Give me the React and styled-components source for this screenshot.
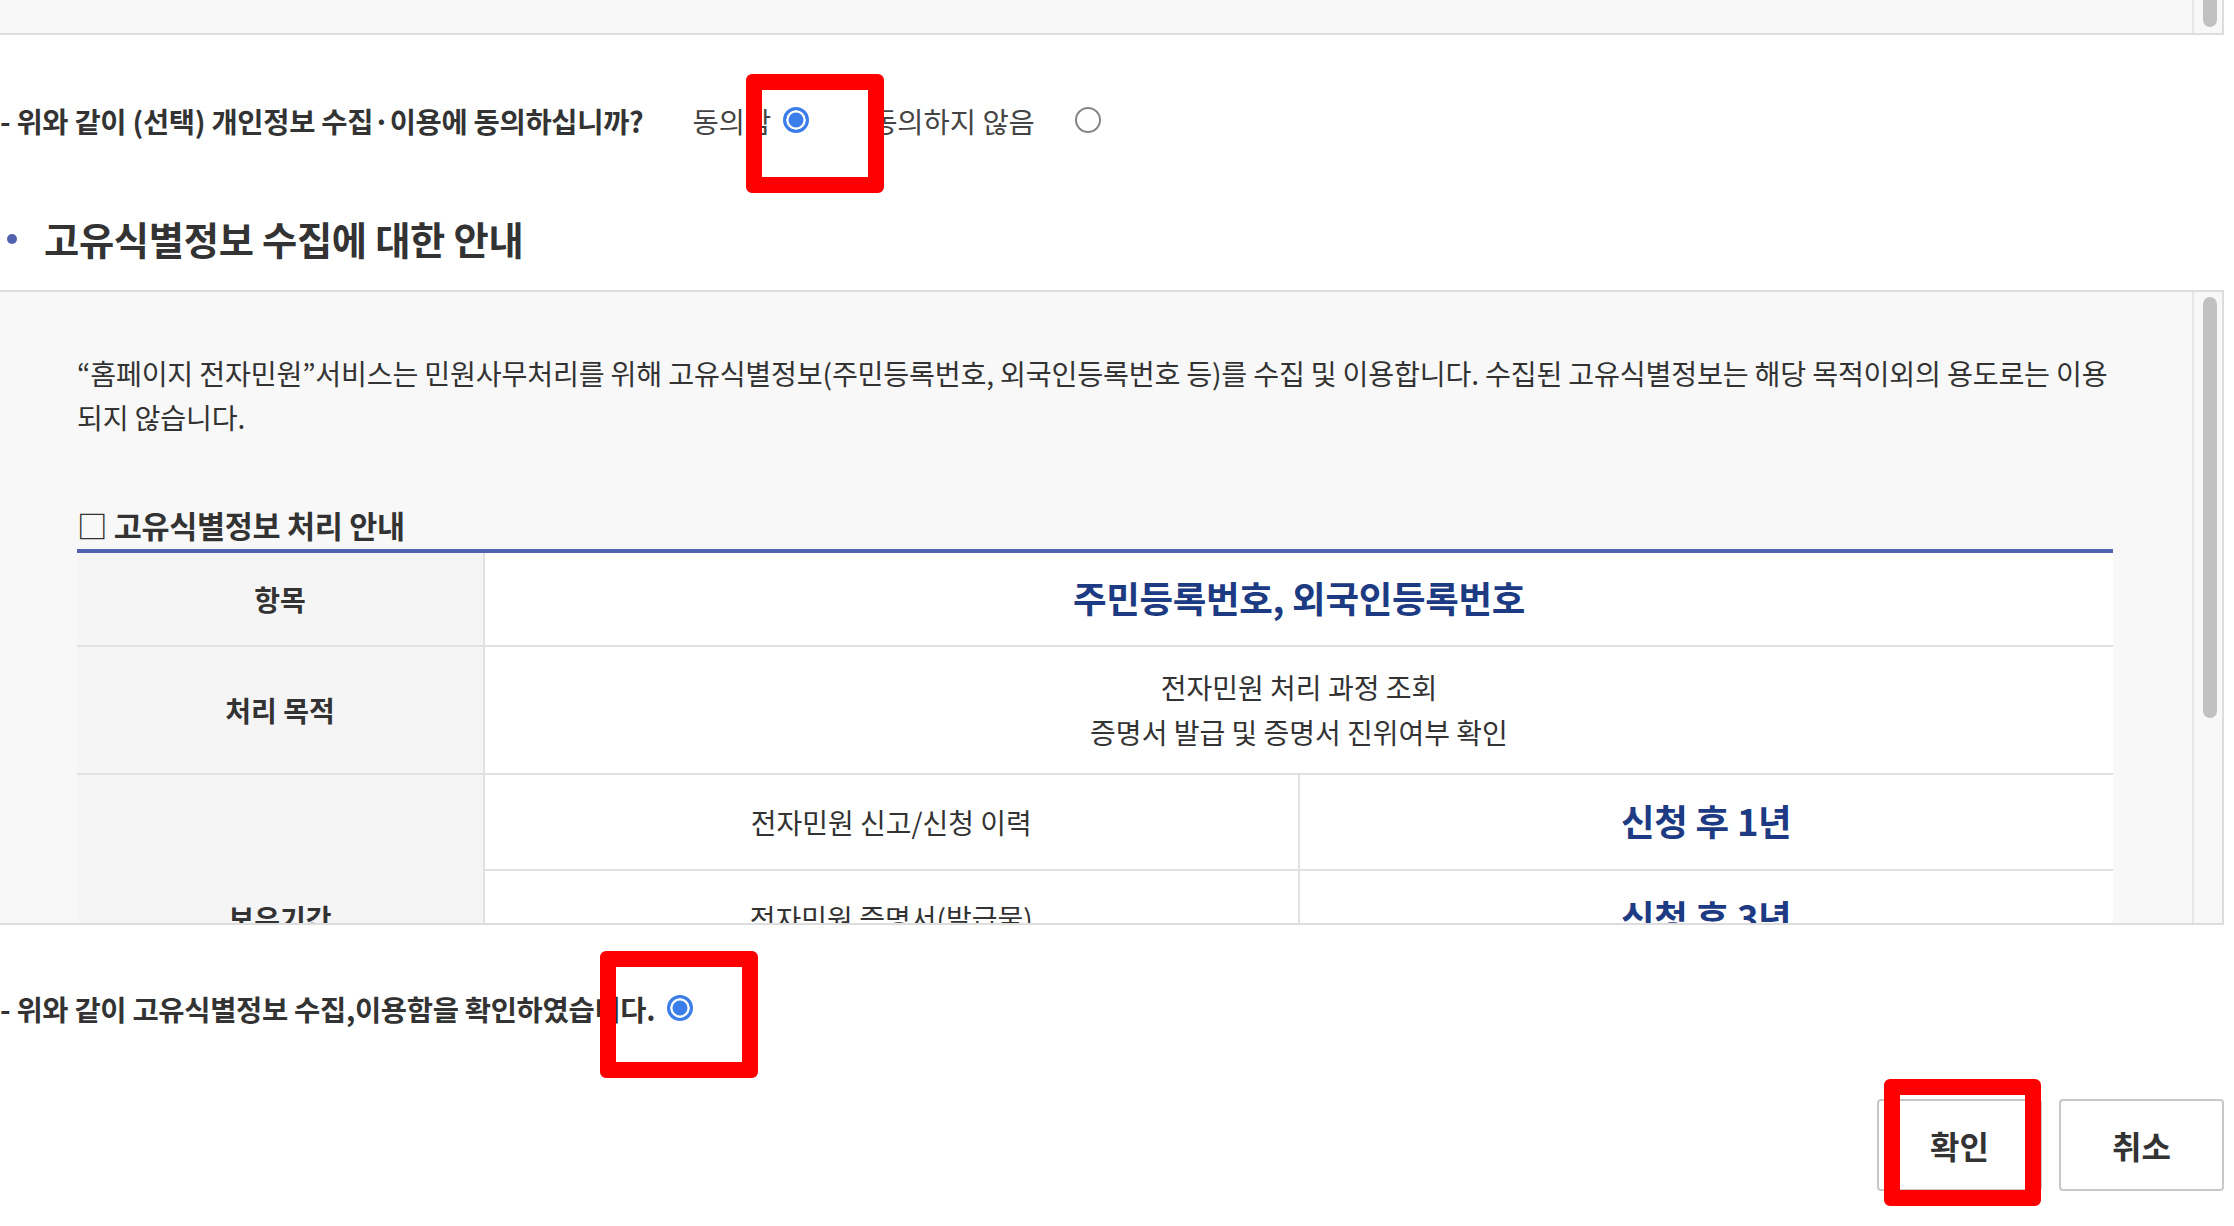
import React from "react"
import styled, { createGlobalStyle } from "styled-components"

const GlobalStyle = createGlobalStyle`
  html, body {
    margin: 0;
    padding: 0;
    background: #fff;
    overflow: hidden;
  }
  body {
    font-family: "Noto Sans CJK KR", "Noto Sans", sans-serif;
    color: #333;
  }
`

const Page = styled.div`
  position: relative;
  width: 2234px;
  height: 1226px;
  overflow: hidden;
`

/* a box with its own (drawn) scrollbar on the right */
const ScrollBox = styled.div`
  display: flex;
  width: 2224px;
  height: ${(p) => p.$h}px;
  box-sizing: border-box;
  margin-top: ${(p) => p.$mt || 0}px;
  background: #f8f8f8;
  border-top: ${(p) => (p.$top ? "2px solid #ddd" : "none")};
  border-bottom: 2px solid #ddd;
  border-right: 2px solid #ddd;
`

const ScrollArea = styled.div`
  flex: 1;
  min-width: 0;
  overflow: hidden;
`

const Track = styled.div`
  flex: 0 0 30px;
  box-sizing: border-box;
  display: flex;
  flex-direction: column;
  justify-content: ${(p) => (p.$end ? "flex-end" : "flex-start")};
  padding: ${(p) => (p.$end ? "0 5px 6px 9px" : "5px 5px 0 9px")};
  border-left: 2px solid #e6e6e6;
  overflow: hidden;
`

const Thumb = styled.div`
  height: ${(p) => p.$h}px;
  background: #c1c1c1;
  border-radius: ${(p) => (p.$end ? "0 0 8px 8px" : "8px")};
`

const QuestionRow = styled.div`
  display: flex;
  align-items: center;
  height: ${(p) => p.$h || 60}px;
  margin-top: ${(p) => p.$mt}px;
`

const Question = styled.span`
  font-size: 28.5px;
  font-weight: 700;
  color: #333;
  letter-spacing: -0.3px;
  white-space: nowrap;
`

const Option = styled.label`
  display: flex;
  align-items: center;
  margin-left: ${(p) => p.$ml}px;
  font-size: 28.5px;
  color: #444;
  white-space: nowrap;
`

const Radio = styled.input.attrs({ type: "radio" })`
  appearance: none;
  -webkit-appearance: none;
  flex: 0 0 auto;
  width: 26px;
  height: 26px;
  margin: 0 0 0 ${(p) => p.$ml}px;
  border-radius: 50%;
  box-sizing: border-box;
  border: 2px solid #858585;
  background: #fff;

  &:checked {
    border: 3px solid #3b7de9;
    background: #3b7de9;
    box-shadow: inset 0 0 0 2.5px #fff;
  }
`

const Title = styled.h2`
  display: flex;
  align-items: center;
  margin: 63px 0 0;
  height: 50px;
  font-size: 38.3px;
  font-weight: 700;
  color: #333;
  letter-spacing: -0.3px;

  &::before {
    content: "";
    width: 10px;
    height: 10px;
    border-radius: 50%;
    background: #5163b0;
    margin: 2px 27px 0 7px;
  }
`

const InfoInner = styled.div`
  padding: 59px 79px 150px 77px;
`

const Paragraph = styled.p`
  margin: 0 -16px 0 0;
  font-size: 28.2px;
  line-height: 44px;
  color: #333;
  letter-spacing: -0.2px;
`

const SubTitle = styled.h3`
  margin: 66px 0 4px;
  font-size: 30.5px;
  line-height: 40px;
  font-weight: 700;
  color: #333;
  letter-spacing: -0.3px;
`

const Table = styled.table`
  width: 100%;
  table-layout: fixed;
  border-collapse: collapse;
  border-top: 4px solid #5163b0;
  background: #fff;
`

const Th = styled.th`
  background: #f5f5f5;
  font-size: 28px;
  font-weight: 700;
  color: #333;
  text-align: center;
  border-bottom: 2px solid #e1e1e1;
  border-right: 2px solid #e1e1e1;
  padding: 0;
`

const Td = styled.td`
  height: ${(p) => p.$h}px;
  padding: 0;
  text-align: center;
  font-size: 28px;
  line-height: 45px;
  color: #333;
  border-bottom: 2px solid #e1e1e1;
  border-left: ${(p) => (p.$split ? "2px solid #e1e1e1" : "none")};
`

const Strong = styled.strong`
  font-size: 36.5px;
  font-weight: 700;
  color: #1d3b82;
  letter-spacing: -0.3px;
`

const ButtonRow = styled.div`
  display: flex;
  justify-content: flex-end;
  gap: 17px;
  margin-top: 71px;
  padding-right: 10px;
`

const Button = styled.button`
  width: 165px;
  height: 92px;
  box-sizing: border-box;
  background: #fff;
  border: 2px solid #c8c8c8;
  border-radius: 4px;
  font-family: inherit;
  font-size: 32px;
  font-weight: 700;
  color: #333;
`

const Marker = styled.div`
  position: absolute;
  left: ${(p) => p.$x}px;
  top: ${(p) => p.$y}px;
  width: ${(p) => p.$w}px;
  height: ${(p) => p.$h}px;
  box-sizing: border-box;
  border: 16px solid #ff0000;
  border-radius: 6px;
  pointer-events: none;
`

const retention = [
  ["전자민원 신고/신청 이력", "신청 후 1년"],
  ["전자민원 증명서(발급물)", "신청 후 3년"],
  ["전자민원 처리 결과", "신청 후 5년"],
]

export default function App() {
  return (
    <Page>
      <GlobalStyle />
      <ScrollBox $h={35}>
        <ScrollArea />
        <Track $end>
          <Thumb $end $h={40} />
        </Track>
      </ScrollBox>

      <QuestionRow $mt={55}>
        <Question>- 위와 같이 (선택) 개인정보 수집·이용에 동의하십니까?</Question>
        <Option $ml={49}>
          동의함
          <Radio name="optional" $ml={12} defaultChecked />
        </Option>
        <Option $ml={62}>
          동의하지 않음
          <Radio name="optional" $ml={40} />
        </Option>
      </QuestionRow>

      <Title>고유식별정보 수집에 대한 안내</Title>

      <ScrollBox $h={635} $mt={27} $top>
        <ScrollArea>
          <InfoInner>
            <Paragraph>
              “홈페이지 전자민원”서비스는 민원사무처리를 위해 고유식별정보(주민등록번호, 외국인등록번호 등)를 수집 및
              이용합니다. 수집된 고유식별정보는 해당 목적이외의 용도로는 이용되지 않습니다.
            </Paragraph>
            <SubTitle>□ 고유식별정보 처리 안내</SubTitle>
            <Table>
              <colgroup>
                <col style={{ width: 407 }} />
                <col />
                <col />
              </colgroup>
              <tbody>
                <tr>
                  <Th>항목</Th>
                  <Td $h={92} colSpan={2}>
                    <Strong>주민등록번호, 외국인등록번호</Strong>
                  </Td>
                </tr>
                <tr>
                  <Th>처리 목적</Th>
                  <Td $h={126} colSpan={2}>
                    전자민원 처리 과정 조회
                    <br />
                    증명서 발급 및 증명서 진위여부 확인
                  </Td>
                </tr>
                {retention.map(([what, period], i) => (
                  <tr key={what}>
                    {i === 0 && <Th rowSpan={retention.length}>보유기간</Th>}
                    <Td $h={94}>{what}</Td>
                    <Td $h={94} $split>
                      <Strong>{period}</Strong>
                    </Td>
                  </tr>
                ))}
              </tbody>
            </Table>
          </InfoInner>
        </ScrollArea>
        <Track>
          <Thumb $h={421} />
        </Track>
      </ScrollBox>

      <QuestionRow $mt={63} $h={40}>
        <Question>- 위와 같이 고유식별정보 수집,이용함을 확인하였습니다.</Question>
        <Radio name="confirm" $ml={12} defaultChecked />
      </QuestionRow>

      <ButtonRow>
        <Button>확인</Button>
        <Button>취소</Button>
      </ButtonRow>

      <Marker $x={746} $y={74} $w={138} $h={119} />
      <Marker $x={600} $y={951} $w={158} $h={127} />
      <Marker $x={1884} $y={1079} $w={157} $h={127} />
    </Page>
  )
}
